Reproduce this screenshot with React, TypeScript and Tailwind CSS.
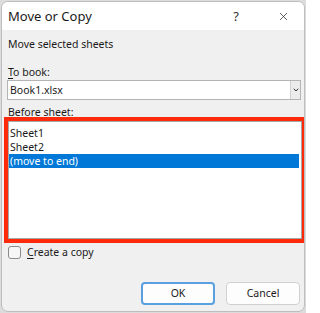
import { ChevronDown, X } from "lucide-react";

const sheets = ["Sheet1", "Sheet2", "(move to end)"];

export default function App() {
  const font = { fontFamily: '"Noto Sans", "Open Sans", sans-serif' };

  return (
    <div className="w-[306px] h-[313px] bg-[#dcdcdc] pl-[1px] pt-[1px]" style={font}>
      <div className="w-[304px] h-[311px] rounded-[7px] border border-[#bdbdbd] bg-[#f0f0f0] overflow-hidden flex flex-col text-[#1a1a1a]">
        {/* Title bar */}
        <div className="h-[28px] bg-white flex items-center pl-[6px] shrink-0">
          <span className="text-[13px] leading-none">Move or Copy</span>
          <span className="ml-auto text-[13px] leading-none text-[#333] mr-[38px]">?</span>
          <X className="w-[13px] h-[13px] mr-[14px] text-[#222]" strokeWidth={1.3} />
        </div>

        {/* Body */}
        <div className="flex flex-col text-[10.5px]">
          <div className="pl-[6px] pt-[6px] leading-[16px]">Move selected sheets</div>

          <div className="pl-[6px] mt-[12px] leading-[16px]">
            <span className="underline underline-offset-2">T</span>o book:
          </div>
          <div className="ml-[5px] w-[294px] h-[20px] bg-white border border-[#b4b4b4] flex items-center">
            <span className="pl-[2px] leading-none">Book1.xlsx</span>
            <div className="ml-auto w-[10px] h-full bg-[#ececec] border-l border-[#d0d0d0] flex items-center justify-center">
              <ChevronDown className="w-[8px] h-[8px] text-[#333]" strokeWidth={3} />
            </div>
          </div>

          <div className="pl-[6px] mt-[4px] h-[13px] leading-[16px]">
            <span className="underline underline-offset-2">B</span>efore sheet:
          </div>

          {/* Highlighted list */}
          <div className="ml-[2px] w-[302px] h-[126px] border-4 border-[#ff2a0a] relative z-10">
            <div className="w-full h-full bg-white border border-[#a8a8a8] pt-[4px]">
              {sheets.map((s, i) => (
                <div
                  key={s}
                  className={`h-[14px] leading-[14px] pl-[1px] mr-[2px] ${
                    i === 2 ? "bg-[#0078d7] text-white" : ""
                  }`}
                >
                  {s}
                </div>
              ))}
            </div>
          </div>

          <div className="flex items-center mt-[2px] pl-[6px] h-[14px]">
            <div className="w-[13px] h-[13px] rounded-[3px] border border-[#8a8a8a] bg-[#f6f6f6]" />
            <span className="ml-[6px] leading-none">
              <span className="underline underline-offset-2">C</span>reate a copy
            </span>
          </div>

          <div className="flex justify-end gap-[11px] mt-[23px] pr-[4px]">
            <button className="w-[74px] h-[23px] rounded-[4px] border-2 border-[#5a9fe0] bg-[#fdfdfd] text-[10.5px] leading-none">
              OK
            </button>
            <button className="w-[74px] h-[23px] rounded-[4px] border border-[#d0d0d0] bg-[#fdfdfd] text-[10.5px] leading-none">
              Cancel
            </button>
          </div>
        </div>
      </div>
    </div>
  );
}
